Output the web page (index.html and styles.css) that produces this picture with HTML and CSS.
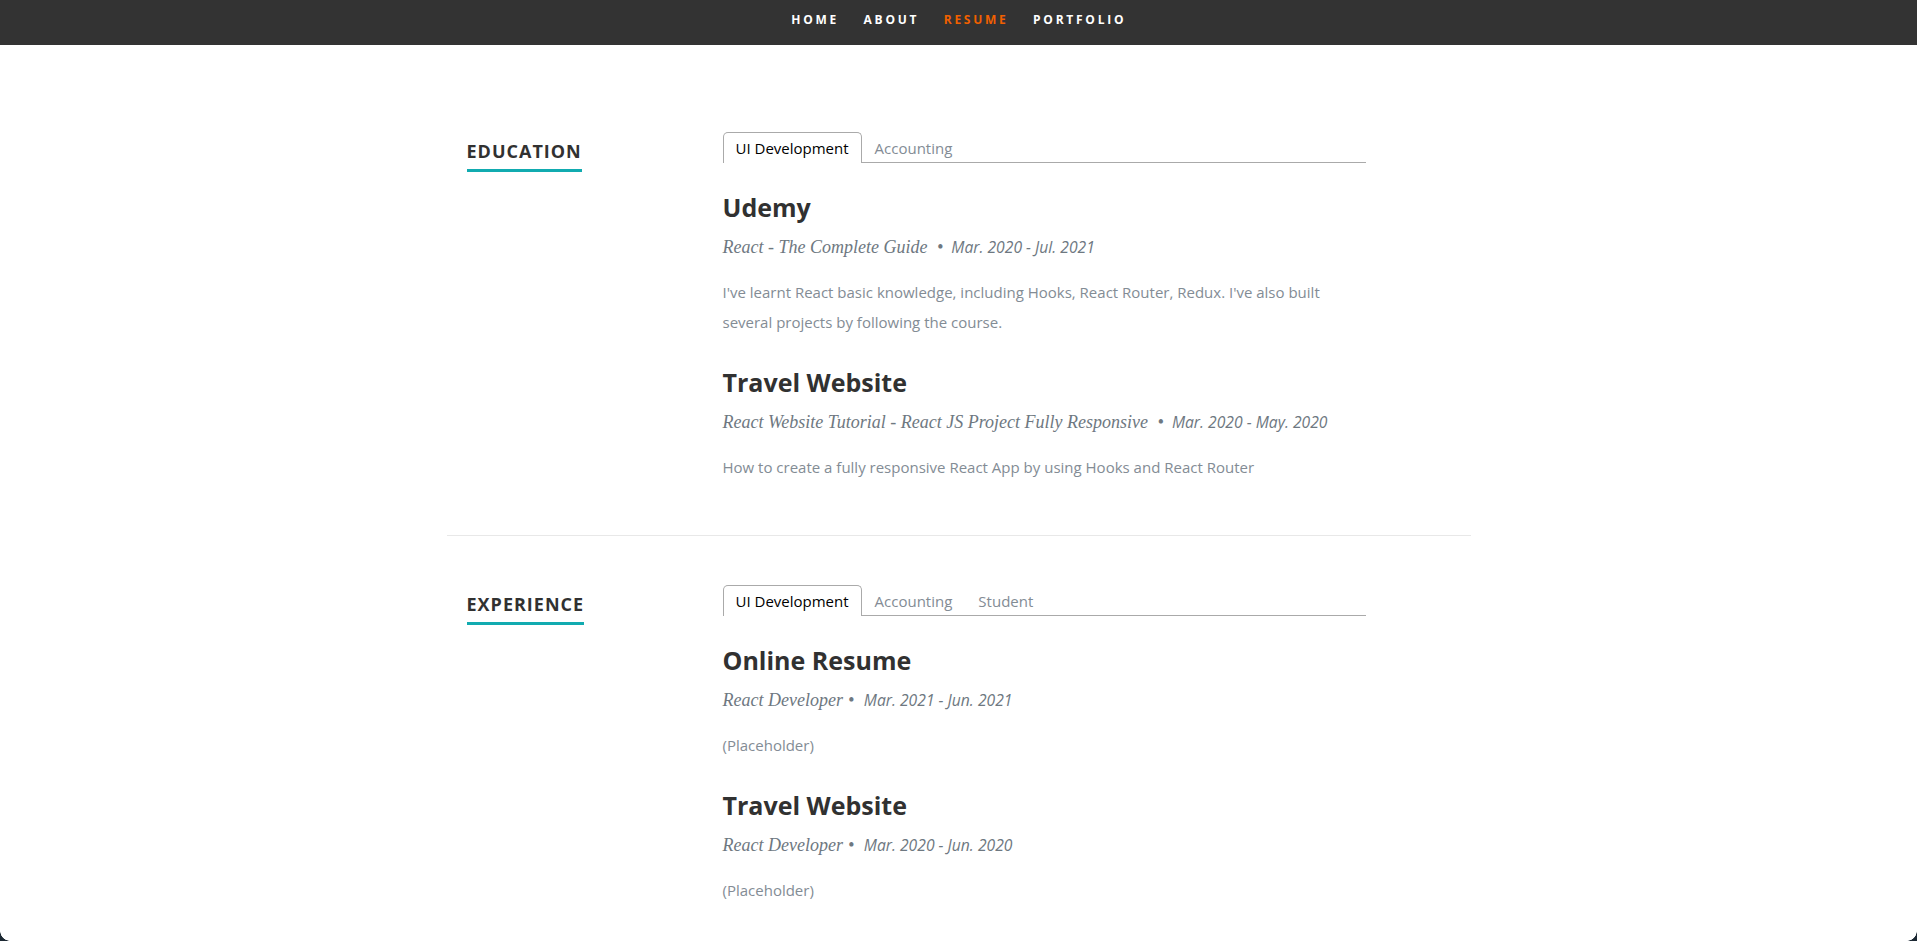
FILE: index.html
```html
<!DOCTYPE html>
<html lang="en">
<head>
<meta charset="utf-8">
<title>Resume</title>
<link rel="stylesheet" href="styles.css">
</head>
<body>
<nav class="nav">
  <ul class="nav-list">
    <li><a class="nav-link" href="#home">Home</a></li>
    <li><a class="nav-link" href="#about">About</a></li>
    <li><a class="nav-link nav-link--current" href="#resume">Resume</a></li>
    <li><a class="nav-link" href="#portfolio">Portfolio</a></li>
  </ul>
</nav>
<main class="resume">
  <section class="resume-row resume-row--divided">
    <div class="header-col">
      <h1 class="section-title"><span>Education</span></h1>
    </div>
    <div class="main-col">
      <ul class="tab-list">
        <li class="tab tab--selected">UI Development</li>
        <li class="tab">Accounting</li>
      </ul>
      <div class="entries">
        <article class="entry">
          <h3 class="entry-title">Udemy</h3>
          <p class="entry-info">React - The Complete Guide <span class="bullet">&bull;</span><em class="entry-date">Mar. 2020 - Jul. 2021</em></p>
          <p class="entry-desc">I've learnt React basic knowledge, including Hooks, React Router, Redux. I've also built several projects by following the course.</p>
        </article>
        <article class="entry">
          <h3 class="entry-title">Travel Website</h3>
          <p class="entry-info">React Website Tutorial - React JS Project Fully Responsive <span class="bullet">&bull;</span><em class="entry-date">Mar. 2020 - May. 2020</em></p>
          <p class="entry-desc">How to create a fully responsive React App by using Hooks and React Router</p>
        </article>
      </div>
    </div>
  </section>
  <section class="resume-row">
    <div class="header-col">
      <h1 class="section-title"><span>Experience</span></h1>
    </div>
    <div class="main-col">
      <ul class="tab-list">
        <li class="tab tab--selected">UI Development</li>
        <li class="tab">Accounting</li>
        <li class="tab">Student</li>
      </ul>
      <div class="entries">
        <article class="entry">
          <h3 class="entry-title">Online Resume</h3>
          <p class="entry-info">React Developer<span class="bullet bullet--tight">&bull;</span> <em class="entry-date">Mar. 2021 - Jun. 2021</em></p>
          <p class="entry-desc">(Placeholder)</p>
        </article>
        <article class="entry">
          <h3 class="entry-title">Travel Website</h3>
          <p class="entry-info">React Developer<span class="bullet bullet--tight">&bull;</span> <em class="entry-date">Mar. 2020 - Jun. 2020</em></p>
          <p class="entry-desc">(Placeholder)</p>
        </article>
        <article class="entry">
          <h3 class="entry-title">Freeway Trucks Website</h3>
          <p class="entry-info">React Developer<span class="bullet bullet--tight">&bull;</span> <em class="entry-date">Jan. 2020 - Mar. 2020</em></p>
          <p class="entry-desc">(Placeholder)</p>
        </article>
      </div>
    </div>
  </section>
</main>
</body>
</html>
```
FILE: styles.css
```css
html, body {
  margin: 0;
  padding: 0;
}

body {
  background: #fff;
  color: #838C95;
  font: 15px/24px "Open Sans", "Liberation Sans", sans-serif;
}

body::before,
body::after {
  content: "";
  position: fixed;
  bottom: 0;
  width: 10px;
  height: 10px;
  z-index: 10;
  pointer-events: none;
}

body::before {
  left: 0;
  background: radial-gradient(circle at 100% 0, transparent 9.5px, #1c2833 10px);
}

body::after {
  right: 0;
  background: radial-gradient(circle at 0 0, transparent 9.5px, #1c2833 10px);
}

/* Navigation */
.nav {
  height: 45px;
  background: #333333;
}

.nav-list {
  display: flex;
  justify-content: center;
  margin: 0;
  padding: 0;
  list-style: none;
}

.nav-link {
  display: block;
  padding: 0 12px 0 12.5px;
  font: 700 12px/40px "Open Sans", sans-serif;
  letter-spacing: 2.75px;
  text-transform: uppercase;
  color: #ffffff;
  text-decoration: none;
}

.nav-link--current {
  color: #F06000;
}

/* Resume */
.resume {
  width: 1024px;
  margin: 0 auto;
  padding-top: 86px;
}

.resume-row {
  display: flex;
}

.resume-row--divided {
  padding-bottom: 53px;
  border-bottom: 1px solid #E8E8E8;
  margin-bottom: 48px;
}

.header-col {
  width: 256px;
  flex: none;
  box-sizing: border-box;
  padding: 8px 20px 0;
}

.section-title {
  margin: 0;
  font: 700 18px/24px "Open Sans", sans-serif;
  letter-spacing: 1px;
  text-transform: uppercase;
  color: #313131;
}

.section-title span {
  padding-bottom: 6px;
  border-bottom: 3px solid #11ABB0;
}

.main-col {
  width: 643px;
  flex: none;
  padding-left: 20px;
}

/* Tabs */
.tab-list {
  display: flex;
  margin: 0 0 29px;
  padding: 0;
  list-style: none;
  border-bottom: 1px solid #aaaaaa;
}

.tab {
  position: relative;
  bottom: -1px;
  padding: 6px 12px;
  border: 1px solid transparent;
  border-bottom: none;
  font-size: 15px;
  line-height: 18px;
  color: #838C95;
}

.tab--selected {
  background: #ffffff;
  border-color: #aaaaaa;
  border-radius: 5px 5px 0 0;
  color: #000000;
}

/* Entries */
.entries {
  display: flex;
  flex-direction: column;
  gap: 30px;
}

.entry-title {
  margin: 0;
  font: 700 25px/30px "Open Sans", sans-serif;
  color: #313131;
}

.entry-info {
  margin: 13px 0 18px;
  font: italic 18px/24px "Liberation Serif", "DejaVu Serif", serif;
  color: #6E7881;
}

.bullet {
  margin: 0 8px 0 5px;
}

.bullet--tight {
  margin: 0 5px;
}

.entry-date {
  font: italic 15.7px/24px "Open Sans", sans-serif;
  color: #6E7881;
}

.entry-desc {
  margin: 0;
  line-height: 30px;
}
```
